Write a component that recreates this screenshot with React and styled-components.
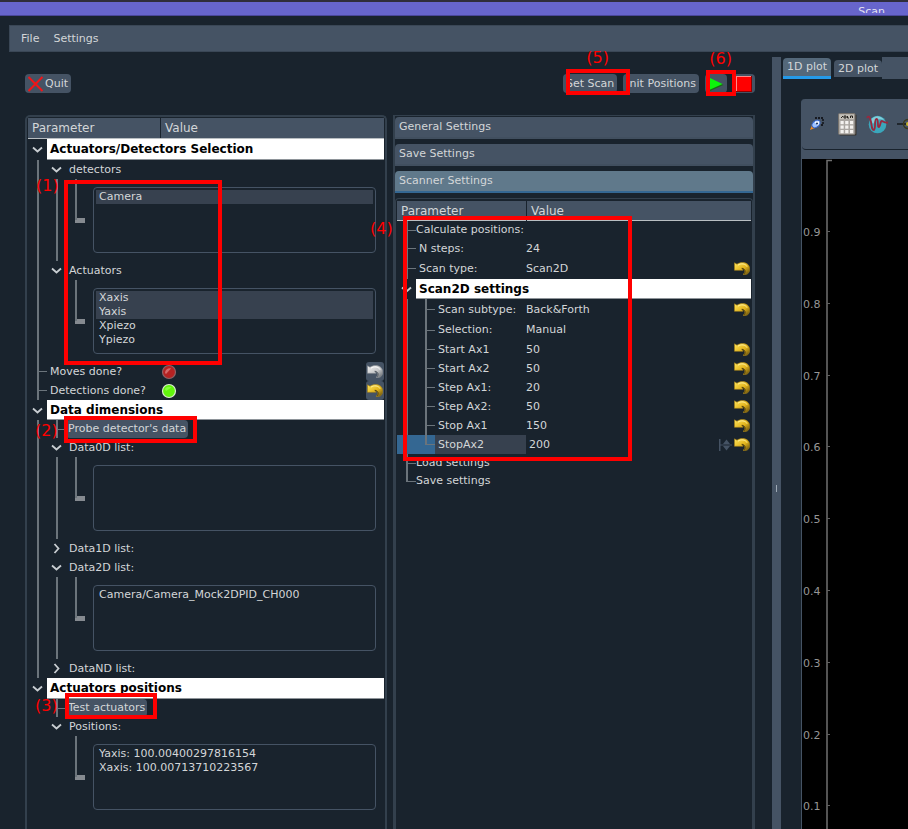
import React from "react";
import styled, { createGlobalStyle, css } from "styled-components";

const c = {
  bg: "#19232d",
  panel: "#455364",
  edge: "#33404d",
  line: "#6b747b",
  text: "#d3d6d8",
  selected: "#37414f",
  accent: "#346792",
  red: "#ff0000",
};

const GlobalStyle = createGlobalStyle`
  * { box-sizing: border-box; }
  body { margin: 0; background: ${c.bg}; }
  button, input { font: inherit; color: inherit; }
`;

const Window = styled.div`
  display: flex;
  flex-direction: column;
  height: 100vh;
  overflow: hidden;
  background: ${c.bg};
  color: ${c.text};
  font: 11px/14px "DejaVu Sans", sans-serif;
`;

const TitleBar = styled.header`
  display: flex;
  justify-content: flex-end;
  flex: none;
  height: 16px;
  padding: 3px 23px 0 0;
  border-top: 2px solid #2f2d3a;
  border-bottom: 1px solid #4a4799;
  background: #6765cc;
`;

const Title = styled.span`
  height: 8px;
  overflow: hidden;
  line-height: 13px;
  color: #e4e2f2;
`;

const MenuBar = styled.nav`
  display: flex;
  flex: none;
  align-items: center;
  gap: 14px;
  height: 27px;
  margin: 9px 0 5px 9px;
  padding-left: 11px;
  border: 1px solid #3a4756;
  border-right: 0;
  background: ${c.panel};
`;

const PlainButton = styled.button`
  padding: 0;
  border: 0;
  background: none;
  white-space: nowrap;
`;

const Main = styled.main`
  display: grid;
  flex: 1;
  grid-template-columns: minmax(0, 1fr) 9px minmax(127px, 13vw);
  min-height: 0;
`;

const ScanArea = styled.section`
  display: flex;
  flex-direction: column;
  gap: 21px;
  min-width: 0;
  min-height: 0;
  padding: 17px 17px 0 25px;
`;

const ButtonRow = styled.div`
  display: flex;
  flex: none;
  align-items: flex-start;
  height: 20px;
`;

const PushButton = styled.button`
  display: inline-flex;
  align-items: center;
  justify-content: center;
  height: ${(p) => (p.$compact ? 18 : 19)}px;
  padding: 0 ${(p) => (p.$compact ? 2 : 3)}px;
  border: 0;
  border-radius: 4px;
  background: ${c.panel};
  white-space: nowrap;
`;

const RunButtons = styled.div`
  position: relative;
  display: flex;
  gap: 6px;
  margin-left: auto;
`;

const Panels = styled.div`
  display: grid;
  flex: 1;
  grid-template-columns: repeat(2, minmax(0, 1fr));
  gap: 6px;
  min-height: 0;
`;

const TreePanel = styled.div`
  position: relative;
  padding: 1px 1px 0;
  border: 2px solid ${c.edge};
  border-bottom: 0;
  border-radius: 5px 5px 0 0;
`;

const ToolBox = styled.div`
  display: flex;
  flex-direction: column;
  gap: 5px;
  padding-top: 1px;
  border: solid ${c.edge};
  border-width: 1px 2px 0;
`;

const ToolBoxTab = styled.button`
  flex: none;
  height: 22px;
  padding: 0 4px;
  border: 0;
  border-bottom: 2px solid ${(p) => (p.$active ? c.accent : "#414f5f")};
  border-radius: 4px 4px 0 0;
  background: ${(p) => (p.$active ? "#60798b" : c.panel)};
  text-align: left;
`;

const SettingsPanel = styled.div`
  position: relative;
  flex: 1;
  padding: 2px 1px 0;
  border: solid ${c.edge};
  border-width: 1px 1px 0;
  border-radius: 4px 4px 0 0;
`;

const Tree = styled.table`
  display: block;
  thead, tbody { display: block; }
`;

const HeadRow = styled.tr`
  display: grid;
  grid-template-columns: ${(p) => p.$name}px minmax(0, 1fr);
  height: ${(p) => (p.$short ? 20 : 21)}px;
  border-bottom: 1px solid #b9bec2;
  background: ${c.panel};
`;

const HeadCell = styled.th`
  padding: 0 4px;
  border-left: ${(p) => (p.$divided ? `1px solid ${c.bg}` : "0")};
  font-size: 12px;
  font-weight: 400;
  line-height: 20px;
  text-align: left;
`;

const Row = styled.tr`
  display: grid;
  grid-template-columns: ${(p) => (p.$name ? `${p.$name}px minmax(0, 1fr)` : "minmax(0, 1fr)")};
  height: ${(p) => p.$h}px;
`;

const NameCell = styled.td`
  display: flex;
  min-width: 0;
  padding: 0;
  align-items: center;
  white-space: nowrap;
  background: ${(p) => (p.$selected ? c.accent : "none")};
`;

const ValueCell = styled.td`
  display: flex;
  align-items: center;
  padding: 0;
  padding-left: ${(p) => (p.$inset ? 2 : 0)}px;
`;

const Label = styled.span`
  display: flex;
  flex: 1;
  align-items: center;
  align-self: stretch;
  padding-left: 3px;
  ${(p) => p.$selected && css`background: ${c.selected};`}
`;

const SectionLabel = styled(Label)`
  border-bottom: 1px solid #8e9499;
  background: #fff;
  color: #000;
  font-size: 12px;
  font-weight: 700;
`;

const stroke = `linear-gradient(${c.line}, ${c.line})`;
const guides = {
  none: "none",
  pass: `${stroke} 9px 0 / 2px 100% no-repeat`,
  tee: `${stroke} 9px 0 / 2px 100% no-repeat, ${stroke} 9px 50% / 10px 1px no-repeat`,
  end: `${stroke} 9px 0 / 2px 50% no-repeat, ${stroke} 9px 50% / 10px 1px no-repeat`,
  list: `${stroke} 9px 0 / 2px 50% no-repeat, linear-gradient(#858a90, #858a90) 9px 50% / 10px 5px no-repeat`,
};

const Guide = styled.span`
  flex: none;
  align-self: stretch;
  width: 19px;
  background: ${(p) => guides[p.$kind]};
`;

const Toggle = styled.button`
  display: flex;
  flex: none;
  align-items: center;
  justify-content: center;
  width: 19px;
  padding: 0;
  border: 0;
  background: none;
`;

const ListBox = styled.ul`
  flex: 1;
  height: 66px;
  margin: 0 8px;
  padding: 2px;
  border: 1px solid ${c.panel};
  border-radius: 4px;
  list-style: none;
`;

const ListItem = styled.li`
  padding-left: 3px;
  background: ${(p) => (p.$selected ? c.selected : "none")};
`;

const ResetButton = styled.button`
  display: flex;
  align-items: center;
  justify-content: center;
  width: 18px;
  height: 19px;
  margin-left: ${(p) => (p.$next ? 0 : "auto")};
  padding: 0;
  border: 0;
  border-radius: 3px;
  background: ${(p) => (p.$framed ? c.panel : "none")};
`;

const NumberInput = styled.input`
  flex: 1;
  min-width: 0;
  padding: 0 1px;
  border: 0;
  outline: 0;
  background: none;
`;

const Mark = styled.span`
  position: absolute;
  z-index: 2;
  top: ${(p) => p.$y}px;
  left: ${(p) => (p.$right === undefined ? `${p.$x}px` : "auto")};
  right: ${(p) => (p.$right === undefined ? "auto" : `${p.$right}px`)};
  width: ${(p) => p.$w}px;
  height: ${(p) => p.$h}px;
  border: 4px solid ${c.red};
  pointer-events: none;
`;

const MarkLabel = styled.span`
  position: absolute;
  z-index: 2;
  top: ${(p) => p.$y}px;
  left: ${(p) => (p.$right === undefined ? `${p.$x}px` : "auto")};
  right: ${(p) => (p.$right === undefined ? "auto" : `${p.$right}px`)};
  color: ${c.red};
  font-size: 16px;
  line-height: 20px;
`;

const Splitter = styled.div`
  display: flex;
  align-items: center;
  justify-content: center;
  padding-top: 90px;
  background: ${c.panel};
`;

const Grip = styled.span`
  width: 1px;
  height: 7px;
  background: #9da9b5;
`;

const PlotArea = styled.section`
  display: flex;
  flex-direction: column;
  min-width: 0;
  overflow: hidden;
`;

const TabBar = styled.div`
  display: flex;
  flex: none;
  height: 22px;
  background: ${c.panel};
`;

const Tabs = styled.div`
  display: flex;
  align-items: flex-end;
  gap: 3px;
  padding-left: 2px;
  background: ${c.bg};
`;

const Tab = styled.button`
  height: ${(p) => (p.$active ? 21 : 19)}px;
  padding: 0 4px;
  border: 0;
  border-bottom: ${(p) => (p.$active ? "3px solid #259ae9" : `2px solid ${c.bg}`)};
  border-radius: 4px 4px 0 0;
  background: ${(p) => (p.$active ? "#54687a" : c.panel)};
  white-space: nowrap;
`;

const PlotPane = styled.div`
  display: flex;
  flex: 1;
  flex-direction: column;
  margin: 20px 0 0 20px;
  border-left: 1px solid ${c.panel};
  border-radius: 4px 0 0 0;
  background: ${c.panel};
  overflow: hidden;
`;

const PlotTools = styled.div`
  display: flex;
  flex: none;
  align-items: center;
  height: 51px;
  border-bottom: 1px solid ${c.bg};
  border-radius: 0 0 0 4px;
`;

const ToolButton = styled.button`
  display: flex;
  flex: none;
  align-items: center;
  justify-content: center;
  width: 30px;
  height: 28px;
  padding: 0;
  border: 0;
  background: none;
`;

const Canvas = styled.div`
  flex: 1;
  margin-top: 9px;
  background: #000;
  svg { display: block; }
`;

function Chevron({ open = true, label }) {
  return (
    <Toggle aria-label={label} aria-expanded={open}>
      <svg width="11" height="11" viewBox="0 0 11 11" fill="none" stroke="#c9ced2" strokeWidth="1.8">
        <path d={open ? "M1 3.5 L5.5 7.5 L10 3.5" : "M3.5 1 L7.5 5.5 L3.5 10"} />
      </svg>
    </Toggle>
  );
}

function UndoIcon({ silver }) {
  const id = silver ? "undo-silver" : "undo-gold";
  return (
    <svg width="16" height="14" viewBox="0 0 16 14" aria-hidden="true">
      <defs>
        <linearGradient id={id} x1="0" y1="0" x2="1" y2="1">
          <stop offset="0" stopColor={silver ? "#f1f1f1" : "#ffe45c"} />
          <stop offset="0.55" stopColor={silver ? "#c4c6c8" : "#e2b41c"} />
          <stop offset="1" stopColor={silver ? "#5d646a" : "#59460d"} />
        </linearGradient>
      </defs>
      <path
        d="M0.5 0.8 L3 2.2 C7 -0.7 15.7 0 15.7 7 C15.7 10 14.5 11.8 12 12.4 H9 C12.2 10.5 11 6.6 7.5 6 L9 8.3 L0.5 8.3 Z"
        fill={`url(#${id})`}
        stroke={silver ? "#8c9196" : "#a5821a"}
        strokeWidth="0.6"
      />
      <path d="M4 3.2 C7 1 11.5 1.6 13 4.6" fill="none" stroke={silver ? "#fff" : "#fff09a"} strokeWidth="1" />
      <path d="M8 6.3 C11.6 7 12 10 10 12" fill="none" stroke={silver ? "#585f66" : "#5c480c"} strokeWidth="1" />
    </svg>
  );
}

function Led({ on }) {
  return (
    <svg width="18" height="16" viewBox="0 0 18 16" role="img" aria-label={on ? "on" : "off"}>
      <circle cx="9" cy="8" r="6.5" fill={on ? "#62f50c" : "#b52222"} stroke={on ? "#dcecd0" : "#8e6266"} strokeWidth="1.2" />
      {!on && <path d="M5 9 C5.2 5.4 8 4 11 4.4 L6 10 Z" fill="#d46a6a" />}
      {on && <path d="M5 6 C6 3.8 9 3.2 11.5 4.4 L6 8 Z" fill="#86ff3c" />}
    </svg>
  );
}

function SectionRow({ h, children }) {
  return (
    <Row $h={h}>
      <NameCell colSpan="2">
        <Chevron label={`Toggle ${children}`} />
        <SectionLabel>{children}</SectionLabel>
      </NameCell>
    </Row>
  );
}

function GroupRow({ outer = "pass", open, children }) {
  return (
    <Row $h={19}>
      <NameCell colSpan="2">
        <Guide $kind={outer} />
        <Chevron open={open} label={`Toggle ${children}`} />
        <Label>{children}</Label>
      </NameCell>
    </Row>
  );
}

function ListRow({ outer = "pass", inner = "pass", label, items, selected = [] }) {
  return (
    <Row $h={82}>
      <NameCell colSpan="2">
        <Guide $kind={outer} />
        <Guide $kind={inner} />
        <Guide $kind="list" />
        <ListBox role="listbox" aria-label={label} aria-multiselectable="true">
          {items.map((item) => (
            <ListItem key={item} role="option" aria-selected={selected.includes(item)} $selected={selected.includes(item)}>
              {item}
            </ListItem>
          ))}
        </ListBox>
      </NameCell>
    </Row>
  );
}

function StatusRow({ label, on }) {
  return (
    <Row $h={19} $name={132}>
      <NameCell>
        <Guide $kind="tee" />
        <Label>{label}</Label>
      </NameCell>
      <ValueCell>
        <Led on={on} />
        <ResetButton $framed aria-label={`Reset ${label}`}>
          <UndoIcon silver={!on} />
        </ResetButton>
      </ValueCell>
    </Row>
  );
}

function ActionRow({ outer = "pass", children }) {
  return (
    <Row $h={18}>
      <NameCell colSpan="2">
        <Guide $kind={outer} />
        <Guide $kind="tee" />
        <PushButton $compact>{children}</PushButton>
      </NameCell>
    </Row>
  );
}

function SelectionTree() {
  return (
    <TreePanel>
      <Tree>
        <thead>
          <HeadRow $name={132}>
            <HeadCell>Parameter</HeadCell>
            <HeadCell $divided>Value</HeadCell>
          </HeadRow>
        </thead>
        <tbody>
          <SectionRow h={21}>Actuators/Detectors Selection</SectionRow>
          <GroupRow>detectors</GroupRow>
          <ListRow label="detectors" items={["Camera"]} selected={["Camera"]} />
          <GroupRow>Actuators</GroupRow>
          <ListRow
            inner="none"
            label="Actuators"
            items={["Xaxis", "Yaxis", "Xpiezo", "Ypiezo"]}
            selected={["Xaxis", "Yaxis"]}
          />
          <StatusRow label="Moves done?" on={false} />
          <StatusRow label="Detections done?" on />
          <SectionRow h={20}>Data dimensions</SectionRow>
          <ActionRow>Probe detector's data</ActionRow>
          <GroupRow>Data0D list:</GroupRow>
          <ListRow label="Data0D list" items={[]} />
          <GroupRow open={false}>Data1D list:</GroupRow>
          <GroupRow>Data2D list:</GroupRow>
          <ListRow label="Data2D list" items={["Camera/Camera_Mock2DPID_CH000"]} />
          <GroupRow open={false}>DataND list:</GroupRow>
          <SectionRow h={21}>Actuators positions</SectionRow>
          <ActionRow outer="none">Test actuators</ActionRow>
          <GroupRow outer="none">Positions:</GroupRow>
          <ListRow
            outer="none"
            inner="none"
            label="Positions"
            items={["Yaxis: 100.00400297816154", "Xaxis: 100.00713710223567"]}
          />
        </tbody>
      </Tree>
      <Mark $x={37} $y={63} $w={158} $h={185} />
      <MarkLabel $x={9} $y={59}>(1)</MarkLabel>
      <Mark $x={37} $y={299} $w={133} $h={27} />
      <MarkLabel $x={8} $y={304}>(2)</MarkLabel>
      <Mark $x={38} $y={576} $w={92} $h={26} />
      <MarkLabel $x={8} $y={579}>(3)</MarkLabel>
    </TreePanel>
  );
}

const settings = [
  { label: "N steps:", value: "24", h: 19 },
  { label: "Scan type:", value: "Scan2D", h: 21, reset: true },
];

const scan2d = [
  { label: "Scan subtype:", value: "Back&Forth", h: 21, reset: true },
  { label: "Selection:", value: "Manual", h: 20 },
  { label: "Start Ax1", value: "50", h: 19, reset: true },
  { label: "Start Ax2", value: "50", h: 19, reset: true },
  { label: "Step Ax1:", value: "20", h: 19, reset: true },
  { label: "Step Ax2:", value: "50", h: 19, reset: true },
  { label: "Stop Ax1", value: "150", h: 19, reset: true },
  { label: "StopAx2", value: "200", h: 19, reset: true, editing: true },
];

function SettingRow({ item, nested }) {
  const { label, value, h, reset, editing } = item;
  return (
    <Row $h={h} $name={129}>
      <NameCell $selected={editing}>
        {nested && <Guide $kind={editing ? "none" : "pass"} />}
        <Guide $kind={editing ? "end" : "tee"} />
        <Label $selected={editing}>{label}</Label>
      </NameCell>
      <ValueCell $inset={editing}>
        {editing ? <NumberInput aria-label={label} defaultValue={value} /> : value}
        {editing && (
          <svg width="14" height="14" viewBox="0 0 14 14" fill="#455364" aria-hidden="true">
            <path d="M0 1 H1.5 V13 H0 Z M1 6.5 H13 V7.5 H1 Z M4 6 L7.5 1.5 L11 6 Z M4 8 L7.5 12.5 L11 8 Z" />
          </svg>
        )}
        {reset && (
          <ResetButton $next={editing} aria-label={`Reset ${label}`}>
            <UndoIcon />
          </ResetButton>
        )}
      </ValueCell>
    </Row>
  );
}

function FlatActionRow({ guide, children }) {
  return (
    <Row $h={18}>
      <NameCell colSpan="2">
        <Guide $kind={guide} />
        <PlainButton>{children}</PlainButton>
      </NameCell>
    </Row>
  );
}

function ScannerTree() {
  return (
    <SettingsPanel>
      <Tree>
        <thead>
          <HeadRow $name={129} $short>
            <HeadCell>Parameter</HeadCell>
            <HeadCell $divided>Value</HeadCell>
          </HeadRow>
        </thead>
        <tbody>
          <FlatActionRow guide="tee">Calculate positions:</FlatActionRow>
          {settings.map((item) => <SettingRow key={item.label} item={item} />)}
          <SectionRow h={20}>Scan2D settings</SectionRow>
          {scan2d.map((item) => <SettingRow key={item.label} item={item} nested />)}
          <FlatActionRow guide="tee">Load settings</FlatActionRow>
          <FlatActionRow guide="end">Save settings</FlatActionRow>
        </tbody>
      </Tree>
      <Mark $x={7} $y={17} $w={229} $h={245} />
      <MarkLabel $x={-26} $y={20}>(4)</MarkLabel>
    </SettingsPanel>
  );
}

function RunControls() {
  return (
    <RunButtons>
      <PushButton>Set Scan</PushButton>
      <PushButton>Init Positions</PushButton>
      <PushButton aria-label="Start scan">
        <svg width="16" height="16" viewBox="1 0 16 16" aria-hidden="true">
          <path d="M3 2.5 L16.5 9 L3 15 Z" fill="#1b6b16" />
          <path d="M2 1.5 L15.5 8 L2 14 Z" fill="#0cf50c" />
        </svg>
      </PushButton>
      <PushButton aria-label="Stop scan">
        <svg width="16" height="16" viewBox="1 0 16 16" aria-hidden="true">
          <rect x="1" width="16" height="16" fill="#8f0000" />
          <rect x="1" width="15" height="15" fill="#ff8a8a" />
          <rect x="2" y="1" width="14" height="14" fill="#ff0000" />
        </svg>
      </PushButton>
      <Mark $right={125} $y={-5} $w={64} $h={26} />
      <MarkLabel $right={146} $y={-26}>(5)</MarkLabel>
      <Mark $right={19} $y={-4} $w={30} $h={26} />
      <MarkLabel $right={23} $y={-25}>(6)</MarkLabel>
    </RunButtons>
  );
}

const ticks = [
  ["0.9", 72], ["0.8", 144], ["0.7", 216], ["0.6", 287], ["0.5", 359],
  ["0.4", 431], ["0.3", 503], ["0.2", 575], ["0.1", 646],
];

function PlotTools1D() {
  return (
    <PlotTools>
      <ToolButton aria-label="Region of interest">
        <svg width="16" height="16" viewBox="0 0 16 16">
          <path d="M6 2 H14 V9 H11" fill="none" stroke="#08090b" strokeWidth="1.3" strokeDasharray="2 1" />
          <path d="M1 14 L3 9 L6 12 Z" fill="#ef8b23" />
          <ellipse cx="7" cy="8" rx="4.5" ry="3.2" transform="rotate(-40 7 8)" fill="#9fc3ff" stroke="#315fc4" />
          <path d="M6 6.5 L9.5 6 L8.5 9" fill="none" stroke="#fff" strokeWidth="1.3" />
          <circle cx="8" cy="7.5" r="1" fill="#142d5c" />
        </svg>
      </ToolButton>
      <ToolButton aria-label="Math">
        <svg width="19" height="23" viewBox="0 0 19 23">
          <rect x="1.5" y="1.5" width="17" height="21" rx="1" fill="#39352f" />
          <rect x="0.5" y="0.5" width="16.5" height="21" rx="1" fill="#aaa6a1" stroke="#77736e" />
          <rect x="1.5" y="1.5" width="14.5" height="4.5" fill="#c4c0b8" />
          <path d="M3 5 L5 3 M6 3 H8 V5 H6 Z M9.5 3 V5 H11 M12.5 5 V3 H14.5 V5" stroke="#25221f" fill="none" />
          {[8, 12.5, 17].map((y) => [2.5, 7.2, 12].map((x) => (
            <rect key={`${x}-${y}`} x={x} y={y} width="3.2" height="3.2" fill="#f4f2ef" />
          )))}
        </svg>
      </ToolButton>
      <ToolButton aria-label="Filter">
        <svg width="23" height="20" viewBox="0 0 23 20">
          <circle cx="11.5" cy="10.5" r="8.8" fill="#3ba6bb" />
          <path d="M5 6 C8 1 15 1 18 6 C13 4 9 6 7 10 Z" fill="#83ccd8" />
          <path
            d="M1 4 C3 1 4 3 5 8 C6 14 6 16 8 16 C10 15 8 5 10.5 5 C13 5 11 14 13 13 C15 11 14 7 16 7 C18 8 19 9 22 8.5"
            fill="none" stroke="#97293f" strokeWidth="1.8"
          />
        </svg>
      </ToolButton>
      <ToolButton aria-label="Crosshair">
        <svg width="20" height="14" viewBox="0 0 20 14" fill="none">
          <path d="M0 7 H20" stroke="#15191d" strokeWidth="1.3" />
          <circle cx="11" cy="7" r="4.5" stroke="#39381d" strokeWidth="1.5" />
          <circle cx="11" cy="7" r="2" fill="#c6b42a" />
        </svg>
      </ToolButton>
    </PlotTools>
  );
}

export default function App() {
  return (
    <Window>
      <GlobalStyle />
      <TitleBar><Title>Scan</Title></TitleBar>
      <MenuBar>
        <PlainButton>File</PlainButton>
        <PlainButton>Settings</PlainButton>
      </MenuBar>
      <Main>
        <ScanArea>
          <ButtonRow>
            <PushButton>
              <svg width="17" height="16" viewBox="0 0 17 16" aria-hidden="true">
                <path d="M0.5 1 L14.5 15 M14.5 1 L0.5 15" stroke="#f01518" strokeWidth="2" />
              </svg>
              Quit
            </PushButton>
            <RunControls />
          </ButtonRow>
          <Panels>
            <SelectionTree />
            <ToolBox>
              <ToolBoxTab>General Settings</ToolBoxTab>
              <ToolBoxTab>Save Settings</ToolBoxTab>
              <ToolBoxTab $active>Scanner Settings</ToolBoxTab>
              <ScannerTree />
            </ToolBox>
          </Panels>
        </ScanArea>
        <Splitter><Grip /></Splitter>
        <PlotArea>
          <TabBar>
            <Tabs role="tablist">
              <Tab role="tab" aria-selected="true" $active>1D plot</Tab>
              <Tab role="tab" aria-selected="false">2D plot</Tab>
            </Tabs>
          </TabBar>
          <PlotPane>
            <PlotTools1D />
            <Canvas>
              <svg width="100%" height="670" role="img" aria-label="Plot axis">
                <path d="M30 1.5 H25 V670" fill="none" stroke="#707070" strokeWidth="1.5" />
                {ticks.map(([text, y]) => (
                  <g key={text}>
                    <path d={`M25 ${y}.5 h3`} stroke="#606060" />
                    <text x="1" y={y + 5} fill="#969696" fontSize="11">{text}</text>
                  </g>
                ))}
              </svg>
            </Canvas>
          </PlotPane>
        </PlotArea>
      </Main>
    </Window>
  );
}
